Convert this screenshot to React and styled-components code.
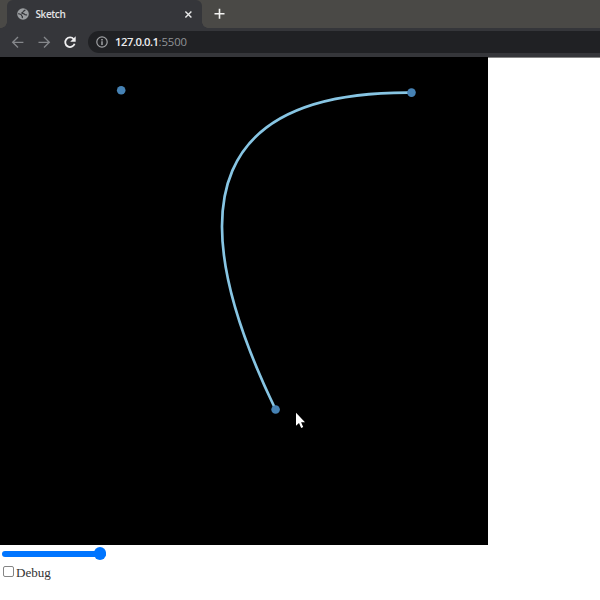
import React from "react";
import styled, { createGlobalStyle } from "styled-components";

const GlobalStyle = createGlobalStyle`
  * { box-sizing: border-box; }
  body { margin: 0; background: #fff; overflow: hidden; }
`;

const Browser = styled.div`
  width: 600px;
  height: 600px;
  display: flex;
  flex-direction: column;
  overflow: hidden;
`;

const TabStrip = styled.header`
  height: 28px;
  flex: none;
  display: flex;
  padding-left: 1px;
  background: #4a4946;
`;

const Tab = styled.div`
  width: 195px;
  display: flex;
  align-items: center;
  padding: 0 9px 0 10px;
  border-radius: 6px 6px 0 0;
  background: #35363a;
`;

const TabFoot = styled.div`
  width: 6px;
  height: 6px;
  align-self: flex-end;
  flex: none;
  background: radial-gradient(
    circle at ${(p) => (p.$side === "left" ? "0 0" : "100% 0")},
    transparent 5.5px,
    #35363a 6px
  );
`;

const TabTitle = styled.span`
  flex: 1;
  margin-left: 6.5px;
  font: 600 10px/14px "Open Sans", sans-serif;
  letter-spacing: -0.4px;
  color: #e4e4e6;
`;

const NewTab = styled.div`
  display: flex;
  align-items: center;
  margin-left: 6px;
`;

const Toolbar = styled.nav`
  height: 29px;
  flex: none;
  display: flex;
  align-items: center;
  padding: 0 0 1px 11px;
  background: #35363a;
`;

const NavIcon = styled.svg`
  flex: none;
  width: 14px;
  height: 14px;
  margin-right: 12px;
`;

const AddressBar = styled.div`
  flex: 1;
  height: 22px;
  display: flex;
  align-items: center;
  padding-left: 8px;
  margin-left: -1px;
  border-radius: 12px 0 0 12px;
  background: #202124;
`;

const Address = styled.span`
  margin-left: 7px;
  font: 600 11.3px/16px "Open Sans", sans-serif;
  letter-spacing: -0.5px;
  color: #ececee;
`;

const Port = styled.span`
  font-weight: 400;
  letter-spacing: -0.1px;
  color: #919396;
`;

const Page = styled.main`
  flex: 1;
  display: flex;
  flex-direction: column;
  background: linear-gradient(#858585 1px, #fff 1px);
`;

const Canvas = styled.svg`
  display: block;
  flex: none;
  width: 488px;
  height: 488px;
  background: #000;
`;

const Controls = styled.form`
  display: flex;
  flex-direction: column;
  align-items: flex-start;
  padding-left: 2px;
`;

const Slider = styled.input`
  appearance: none;
  width: 104px;
  height: 13px;
  margin: 2px 0 0;
  background: transparent;

  &::-webkit-slider-runnable-track {
    height: 6px;
    border-radius: 3px;
    background: #0075ff;
  }

  &::-webkit-slider-thumb {
    appearance: none;
    width: 12.5px;
    height: 12.5px;
    margin-top: -3.5px;
    border-radius: 50%;
    background: #0075ff;
  }
`;

const DebugLabel = styled.label`
  display: flex;
  align-items: center;
  margin-top: 5px;
  font: 13.1px/16px "Liberation Serif", serif;
  color: #333;
`;

const Checkbox = styled.input`
  appearance: none;
  width: 11px;
  height: 11px;
  margin: 0 2px 3px 1px;
  border: 1px solid #858585;
  border-radius: 2px;
  background: #fff;
`;

const POINTS = [
  { x: 121.2, y: 33.2 },
  { x: 411.5, y: 35.6 },
  { x: 275.6, y: 352.5 },
];

export default function App() {
  const [control, end, start] = POINTS;
  return (
    <Browser>
      <GlobalStyle />
      <TabStrip>
        <TabFoot $side="left" />
        <Tab>
          <svg width="12" height="12" viewBox="0 0 12 12">
            <circle cx="6" cy="6" r="5.8" fill="#9a9da0" />
            <path
              d="M8.2 1.6C8 3 6.2 2.7 6 3.9c-.2.9-1.3.5-1.3 1.2 0 .9 2.4.2 2.8 1.2.3.8 1.2.6 2.6.7M1.2 5.6c1.5.3 3.2.7 3.3 1.7.1.9 1.1.8 1 1.5l-.3 1.3"
              fill="none"
              stroke="#35363a"
              strokeWidth="1.2"
            />
          </svg>
          <TabTitle>Sketch</TabTitle>
          <svg width="9" height="9" viewBox="0 0 9 9">
            <path d="m1.4 1.4 6 6m0-6-6 6" stroke="#e8e9e9" strokeWidth="1.4" />
          </svg>
        </Tab>
        <TabFoot $side="right" />
        <NewTab>
          <svg width="12" height="12" viewBox="0 0 12 12">
            <path d="M5.5 .7v10M.5 5.7h10" stroke="#f3f3f2" strokeWidth="1.6" />
          </svg>
        </NewTab>
      </TabStrip>
      <Toolbar>
        <NavIcon viewBox="0 0 14 14" fill="none" stroke="#85878b" strokeWidth="1.35">
          <path d="M12.4 7.3H1.8M7 2 1.7 7.3 7 12.6" />
        </NavIcon>
        <NavIcon viewBox="0 0 14 14" fill="none" stroke="#85878b" strokeWidth="1.35">
          <path d="M1.5 7.3h10.6M7 2l5.3 5.3L7 12.6" />
        </NavIcon>
        <NavIcon viewBox="0 0 14 14">
          <path d="M10.8 4.2A4.8 4.8 0 1 0 11.6 8.8" fill="none" stroke="#f0f0f1" strokeWidth="1.8" />
          <path d="M12.7 1.2v5.5H7.2z" fill="#f0f0f1" />
        </NavIcon>
        <AddressBar>
          <svg width="12" height="12" viewBox="0 0 12 12" fill="none" stroke="#a0a2a5">
            <circle cx="6" cy="6" r="5.2" strokeWidth="1.2" />
            <path d="M6 5.3v3.6M6 3.1v1.3" strokeWidth="1.5" />
          </svg>
          <Address>
            127.0.0.1<Port>:5500</Port>
          </Address>
        </AddressBar>
      </Toolbar>
      <Page>
        <Canvas viewBox="0 0 488 488">
          <path
            d={`M${start.x} ${start.y}Q${control.x} ${control.y} ${end.x} ${end.y}`}
            fill="none"
            stroke="#87c5e3"
            strokeWidth="2.7"
          />
          {POINTS.map((p) => (
            <circle key={p.x} cx={p.x} cy={p.y} r="4.3" fill="#4682b4" />
          ))}
          <path d="M296 355.8v13l3-2.8 2.2 5 2-.9-2.1-4.8h3.9z" fill="#fff" />
        </Canvas>
        <Controls>
          <Slider type="range" min="0" max="1" step="0.01" defaultValue="1" />
          <DebugLabel>
            <Checkbox type="checkbox" />
            Debug
          </DebugLabel>
        </Controls>
      </Page>
    </Browser>
  );
}
